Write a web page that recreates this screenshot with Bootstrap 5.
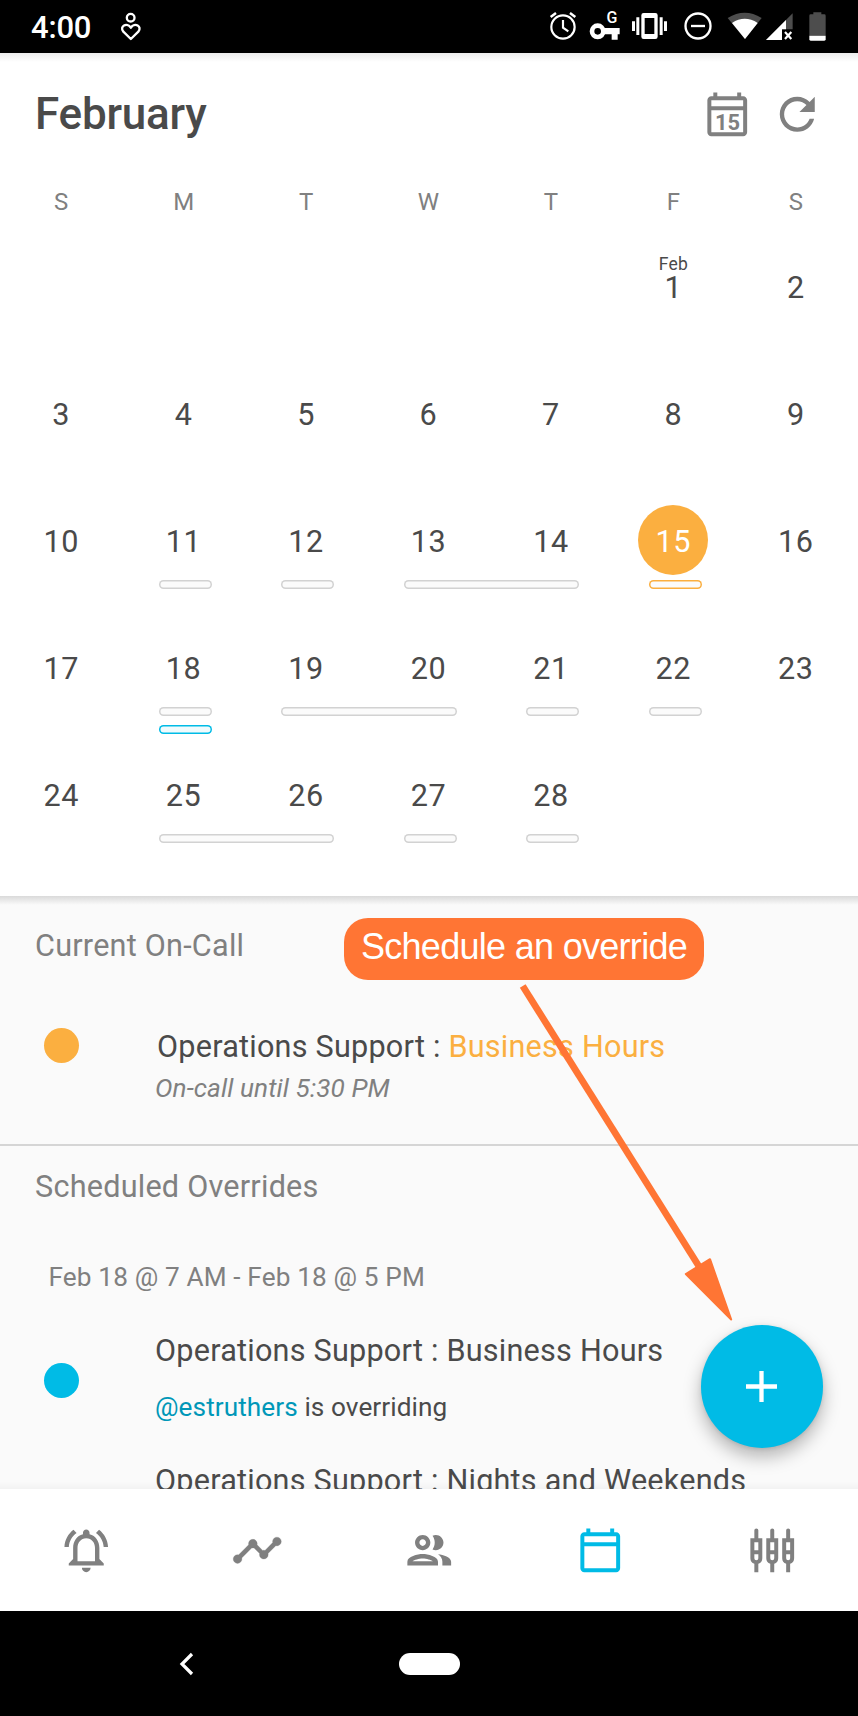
<!DOCTYPE html>
<html lang="en">
<head>
<meta charset="utf-8">
<meta name="viewport" content="width=device-width, initial-scale=1">
<title>On-Call Schedule</title>
<link href="https://cdn.jsdelivr.net/npm/bootstrap@5.3.0/dist/css/bootstrap.min.css" rel="stylesheet">
<style>
  body { font-family: Roboto, "Liberation Sans", sans-serif; width: 858px; height: 1716px; overflow: hidden; color: #4a4a4a; background: #fff; }
  svg { display: block; flex: none; }
  .status-bar { height: 53px; padding-left: 31px; }
  .clock { font-size: 31px; font-weight: 500; line-height: 53px; letter-spacing: -.2px; width: 89px; padding-top: 1px; }
  .calendar-pane { height: 843px; }
  .top-shade { height: 9px; margin-bottom: -9px; background: linear-gradient(#ececec, #fff); }
  .month-head { height: 122px; padding: 0 35px 0 35px; color: #808080; }
  .month-title { font-size: 44px; font-weight: 500; line-height: 123px; letter-spacing: -.2px; color: #4a4a4a; }
  .reload-icon { margin-left: 17.5px; }
  .weekdays, .week { display: grid; grid-template-columns: repeat(7, minmax(0, 1fr)); width: 857px; }
  .weekdays { font-size: 24px; line-height: 55px; height: 53px; color: #808080; text-align: center; }
  .week { height: 127px; grid-template-rows: 93px; grid-auto-rows: 9px; row-gap: 0; align-content: start; }
  .day { grid-row: 1; margin: 23px auto 0; width: 70px; height: 70px; padding-top: 3px; line-height: 67px; font-size: 30.6px; letter-spacing: .6px; text-align: center; white-space: nowrap; }
  .today { background: #fbaf40; color: #fff; }
  .month-start { padding-top: 4px; line-height: 30px; }
  .month-tag { display: block; font-size: 17.5px; line-height: 18px; letter-spacing: .2px; }
  .shift { grid-row: 2; height: 9px; margin: 5px 33px 0 36.5px; box-shadow: inset 0 0 0 1.5px #d2d2d2; border-radius: 5px; background: #fbfbfb; }
  .shift-now { box-shadow: inset 0 0 0 1.5px #fbaf40; }
  .shift-override { grid-row: 3; margin-top: 14px; box-shadow: inset 0 0 0 1.5px #00bbe6; background: #f0fbfd; }
  .details { height: 593px; background: #fafafa; }
  .details-shade { height: 9px; margin-bottom: -9px; background: linear-gradient(#dadada, #fafafa); }
  .section-title { font-size: 30.6px; line-height: 40px; color: #808080; padding-left: 35px; letter-spacing: .23px; }
  .entry { padding-left: 44px; }
  .dot { width: 35px; height: 35px; flex: none; }
  .dot-amber { background: #fbaf40; }
  .dot-cyan { background: #00bbe6; }
  .entry-title { font-size: 30.6px; line-height: 40px; letter-spacing: .23px; white-space: nowrap; }
  .entry-note { font-size: 26.2px; line-height: 36px; letter-spacing: .07px; white-space: nowrap; }
  .window-note { letter-spacing: .14px; }
  .muted { color: #808080; }
  .amber { color: #fbaf40; }
  .handle { color: #0097b8; }
  .on-call { height: 250px; border-bottom: 2px solid #d5d5d5; }
  .callout-tip { left: 344px; top: 22px; width: 360px; height: 62px; border-radius: 24px; background: #ff7534; color: #fff; font: 36px/57px "Liberation Sans", sans-serif; letter-spacing: -.7px; text-align: center; white-space: nowrap; }
  .arrow { left: 510px; top: 80px; }
  .fab { left: 700.5px; top: 429px; width: 122.5px; height: 122.5px; background: #00bbe6; box-shadow: 0 9px 18px rgba(0,0,0,.28), 0 1px 4px rgba(0,0,0,.1); }
  .bottom-shade { left: 0; right: 0; bottom: 0; height: 8px; background: linear-gradient(rgba(0,0,0,0), rgba(0,0,0,.03)); }
  .tabs { height: 122px; color: #808080; }
  .tabs .active { color: #00bbe6; }
  .system-nav { height: 105px; padding-left: 179px; }
  .home-pill { width: 61px; height: 22px; background: #fff; margin-left: 205px; }
</style>
</head>
<body>
<div class="status-bar bg-black text-white d-flex align-items-center">
  <div class="clock">4:00</div>
  <svg width="22" height="53" viewBox="360 0 66 159" fill="none" stroke="#fff" stroke-width="7"><circle cx="392" cy="53" r="11.500"/><path d="M392.500 117L370 95C357 79 381 65 392.500 83C404 65 428 79 415 95Z" stroke-linejoin="round"/></svg>
  <div class="d-flex ms-auto">
    <svg width="36.670" height="53" viewBox="50 0 110 159" fill="none" stroke="#fff" stroke-width="6.500"><circle cx="98" cy="81" r="35"/><path d="M98 60V83L114 94"/><path d="M61 51L77 39M135 51L119 39" stroke-width="7.500"/></svg>
    <svg width="43.330" height="53" viewBox="160 0 130 159"><circle cx="204" cy="94" r="17" fill="none" stroke="#fff" stroke-width="14"/><path d="M222 84H270V103H264V119H246V103H222Z" fill="#fff"/><text x="247" y="70" text-anchor="middle" font-family="Roboto" font-size="48" font-weight="500" fill="#fff">G</text></svg>
    <svg width="48.330" height="53" viewBox="290 0 145 159" fill="#fff"><path fill-rule="evenodd" d="M340 39H375Q382 39 382 46V110Q382 117 375 117H340Q333 117 333 110V46Q333 39 340 39ZM343 54V102H372V54Z"/><path d="M318 52h9v53h-9zM305 64h9v29h-9zM388 52h9v53h-9zM401 64h9v29h-9z"/></svg>
    <svg width="45" height="53" viewBox="435 0 135 159" fill="none" stroke="#fff" stroke-width="7"><circle cx="504" cy="78" r="37.500"/><path d="M483 78H525"/></svg>
    <svg width="43.330" height="53" viewBox="570 0 130 159"><path d="M593 54Q644 22 695 54L645 117Z" fill="#4d4d4d"/><path d="M606 69Q644 44 683 69L645 117Z" fill="#fff"/></svg>
    <svg width="36.670" height="53" viewBox="700 0 110 159"><path d="M709 120L789 40V88H757V120Z" fill="#4d4d4d"/><path d="M709 120L769 60V88H757V120Z" fill="#fff"/><path d="M766 96L785 117M785 96L766 117" stroke="#fff" stroke-width="6.500"/></svg>
    <svg width="58" height="53" viewBox="810 0 174 159"><path d="M850 37H874V43H883Q887 43 887 47V107H838V47Q838 43 842 43H850Z" fill="#4d4d4d"/><path d="M838 107H887V118Q887 122 883 122H842Q838 122 838 118Z" fill="#fff"/></svg>
  </div>
</div>

<main>
  <section class="calendar-pane">
    <div class="top-shade"></div>
    <div class="month-head d-flex align-items-center position-relative">
      <h1 class="month-title m-0 me-auto">February</h1>
      <svg width="52.500" height="52.500" viewBox="-1.200 -1.200 26.400 26.400" fill="currentColor"><path d="M20 3h-1V1h-2v2H7V1H5v2H4c-1.100 0-2 .9-2 2v16c0 1.100.9 2 2 2h16c1.100 0 2-.9 2-2V5c0-1.100-.9-2-2-2zm0 18H4V10h16v11zm0-13H4V5h16v3z"/><text x="12.100" y="19.700" text-anchor="middle" font-family="Roboto" font-size="11" font-weight="700">15</text></svg>
      <svg class="reload-icon" width="52.500" height="52.500" viewBox="0 0 24 24" fill="currentColor"><path d="M17.650 6.350C16.200 4.900 14.210 4 12 4c-4.420 0-7.990 3.580-7.990 8s3.570 8 7.990 8c3.730 0 6.840-2.550 7.730-6h-2.080c-.82 2.330-3.040 4-5.650 4-3.310 0-6-2.690-6-6s2.690-6 6-6c1.660 0 3.140.69 4.220 1.780L13 11h7V4l-2.350 2.350z"/></svg>
    </div>
    <div class="weekdays"><div>S</div><div>M</div><div>T</div><div>W</div><div>T</div><div>F</div><div>S</div></div>
    <div class="week">
      <div class="day month-start" style="grid-column:6"><span class="month-tag">Feb</span>1</div><div class="day" style="grid-column:7">2</div>
    </div>
    <div class="week">
      <div class="day">3</div><div class="day">4</div><div class="day">5</div><div class="day">6</div><div class="day">7</div><div class="day">8</div><div class="day">9</div>
    </div>
    <div class="week">
      <div class="day">10</div><div class="day">11</div><div class="day">12</div><div class="day">13</div><div class="day">14</div><div class="day today rounded-circle">15</div><div class="day">16</div>
      <div class="shift" style="grid-column:2"></div><div class="shift" style="grid-column:3"></div><div class="shift" style="grid-column:4 / span 2"></div><div class="shift shift-now" style="grid-column:6"></div>
    </div>
    <div class="week">
      <div class="day">17</div><div class="day">18</div><div class="day">19</div><div class="day">20</div><div class="day">21</div><div class="day">22</div><div class="day">23</div>
      <div class="shift" style="grid-column:2"></div><div class="shift" style="grid-column:3 / span 2"></div><div class="shift" style="grid-column:5"></div><div class="shift" style="grid-column:6"></div>
      <div class="shift shift-override" style="grid-column:2"></div>
    </div>
    <div class="week">
      <div class="day">24</div><div class="day">25</div><div class="day">26</div><div class="day">27</div><div class="day">28</div>
      <div class="shift" style="grid-column:2 / span 2"></div><div class="shift" style="grid-column:4"></div><div class="shift" style="grid-column:5"></div>
    </div>
  </section>

  <section class="details position-relative overflow-hidden">
    <div class="on-call">
      <div class="details-shade"></div>
      <h2 class="section-title fw-normal m-0" style="padding-top:30px">Current On-Call</h2>
      <div class="entry d-flex" style="padding-top:61px">
        <div class="dot dot-amber rounded-circle" style="margin-top:1px"></div>
        <div style="margin-left:76px">
          <div class="entry-title" style="padding-left:2px">Operations Support : <span class="amber">Business Hours</span></div>
          <div class="entry-note muted fst-italic" style="margin-top:3px">On-call until 5:30 PM</div>
        </div>
      </div>
    </div>
    <h2 class="section-title fw-normal m-0" style="padding-top:21px">Scheduled Overrides</h2>
    <div class="entry-note window-note muted" style="padding:52px 0 0 48.500px">Feb 18 @ 7 AM - Feb 18 @ 5 PM</div>
    <div class="entry d-flex" style="padding-top:36px">
      <div class="dot dot-cyan rounded-circle" style="margin-top:32px"></div>
      <div style="margin-left:76px">
        <div class="entry-title">Operations Support : Business Hours</div>
        <div class="entry-note" style="margin-top:18px"><span class="handle">@estruthers</span> is overriding</div>
        <div class="entry-title" style="margin-top:36px">Operations Support : Nights and Weekends</div>
      </div>
    </div>
    <div class="bottom-shade position-absolute"></div>
    <button class="fab btn border-0 p-0 rounded-circle position-absolute d-flex align-items-center justify-content-center" aria-label="Add override">
      <svg width="31" height="31" viewBox="0 0 31 31" stroke="#fff" stroke-width="4.300"><path d="M0 15.500H31M15.500 0V31"/></svg>
    </button>
    <div class="callout-tip position-absolute">Schedule an override</div>
    <svg class="arrow position-absolute" width="230" height="350" viewBox="510 976 230 350" fill="#ff7534"><path d="M522.700 986L700 1268" stroke="#ff7534" stroke-width="6.800"/><path d="M685.800 1274L710 1259.200L731.200 1319.500Z" stroke="#ff7534" stroke-width="2" stroke-linejoin="round"/></svg>
  </section>
</main>

<nav class="tabs bg-white d-flex">
  <a class="flex-fill d-flex align-items-center justify-content-center text-reset"><svg width="52.500" height="52.500" viewBox="0 0 24 24" fill="currentColor"><path d="M12 22c1.100 0 2-.9 2-2h-4c0 1.100.9 2 2 2zm6-6v-5c0-3.070-1.630-5.640-4.500-6.320V4c0-.83-.67-1.500-1.500-1.500s-1.500.67-1.500 1.500v.68C7.640 5.360 6 7.920 6 11v5l-2 2v1h16v-1l-2-2zm-2 1H8v-6c0-2.480 1.510-4.500 4-4.500s4 2.020 4 4.500v6zM7.580 4.080L6.150 2.650C3.750 4.480 2.170 7.300 2.030 10.500h2c.15-2.650 1.510-4.970 3.550-6.420zm12.390 6.420h2c-.15-3.200-1.730-6.020-4.120-7.850l-1.420 1.430c2.020 1.450 3.390 3.770 3.540 6.420z"/></svg></a>
  <a class="flex-fill d-flex align-items-center justify-content-center text-reset"><svg width="52.500" height="52.500" viewBox="0 0 24 24" fill="currentColor"><path d="M23 8c0 1.100-.9 2-2 2-.18 0-.35-.02-.51-.07l-3.560 3.550c.05.16.07.34.07.52 0 1.100-.9 2-2 2s-2-.9-2-2c0-.18.02-.36.07-.52l-2.550-2.550c-.16.05-.34.07-.52.07s-.36-.02-.52-.07l-4.550 4.560c.05.16.07.33.07.51 0 1.100-.9 2-2 2s-2-.9-2-2 .9-2 2-2c.18 0 .35.02.51.07l4.560-4.550C8.020 9.360 8 9.180 8 9c0-1.100.9-2 2-2s2 .9 2 2c0 .18-.02.36-.07.52l2.550 2.550c.16-.05.34-.07.52-.07s.36.02.52.07l3.550-3.560C19.020 8.350 19 8.180 19 8c0-1.100.9-2 2-2s2 .9 2 2z" stroke="currentColor" stroke-width=".12"/></svg></a>
  <a class="flex-fill d-flex align-items-center justify-content-center text-reset"><svg width="52.500" height="52.500" viewBox="0 0 24 24" fill="currentColor"><path d="M9 13.750c-2.340 0-7 1.170-7 3.500V19h14v-1.750c0-2.330-4.660-3.500-7-3.500zM4.340 17c.84-.58 2.870-1.250 4.660-1.250s3.820.67 4.660 1.250H4.340zM9 12c1.930 0 3.500-1.570 3.500-3.500S10.930 5 9 5 5.500 6.570 5.500 8.500 7.070 12 9 12zm0-5c.83 0 1.500.67 1.500 1.500S9.830 10 9 10s-1.500-.67-1.500-1.500S8.170 7 9 7zm7.040 6.810c1.160.84 1.960 1.960 1.960 3.440V19h4v-1.750c0-2.020-3.500-3.170-5.960-3.440zM15 12c1.930 0 3.500-1.570 3.500-3.500S16.930 5 15 5c-.54 0-1.040.13-1.500.35.63.89 1 1.980 1 3.150s-.37 2.260-1 3.150c.46.22.96.35 1.500.35z"/></svg></a>
  <a class="active flex-fill d-flex align-items-center justify-content-center"><svg width="52.500" height="52.500" viewBox="-1.200 -1.200 26.400 26.400" fill="currentColor"><path d="M20 3h-1V1h-2v2H7V1H5v2H4c-1.100 0-2 .9-2 2v16c0 1.100.9 2 2 2h16c1.100 0 2-.9 2-2V5c0-1.100-.9-2-2-2zm0 18H4V10h16v11zm0-13H4V5h16v3z"/></svg></a>
  <a class="flex-fill d-flex align-items-center justify-content-center text-reset"><svg width="52.500" height="52.500" viewBox="-1.200 -1.200 26.400 26.400" fill="currentColor" fill-rule="evenodd"><defs><path id="jack" d="M1 6H3V2a1 1 0 0 1 2 0V6H7V16a3 3 0 0 1-2 2.820V23H3V18.820A3 3 0 0 1 1 16ZM3 8V12H5V8ZM3 14V16a1 1 0 0 0 2 0V14Z"/></defs><use href="#jack"/><use href="#jack" x="8"/><use href="#jack" x="16"/></svg></a>
</nav>
<div class="system-nav bg-black d-flex align-items-center">
  <svg width="15" height="24" viewBox="0 0 15 24" fill="none" stroke="#fff" stroke-width="3.200"><path d="M13 2L3 12L13 22"/></svg>
  <div class="home-pill rounded-pill"></div>
</div>
<script src="https://cdn.jsdelivr.net/npm/bootstrap@5.3.0/dist/js/bootstrap.bundle.min.js"></script>
</body>
</html>
